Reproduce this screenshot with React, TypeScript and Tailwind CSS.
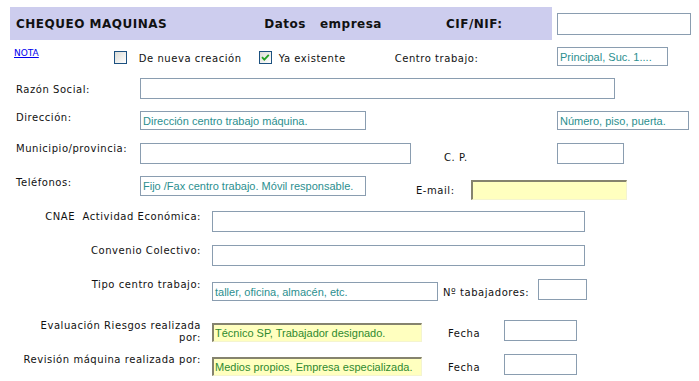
import React from "react";

const label = "font-['DejaVu_Sans',sans-serif] text-[10px] leading-[12px] tracking-[0.55px] text-[#111] whitespace-nowrap";
const field = "font-['Liberation_Sans',sans-serif] text-[11px] leading-[14px] text-[#2b8f8f] whitespace-nowrap overflow-hidden";

interface BoxProps {
  w: string;
  h?: string;
  text?: string;
  yellow?: boolean;
  className?: string;
}

const Box: React.FC<BoxProps> = ({ w, h = "h-[21px]", text, yellow, className = "" }) => {
  if (yellow) {
    return (
      <div
        className={`${w} ${h} ${className} shrink-0 bg-[#ffffbf] border-t-2 border-l-2 border-r border-b border-t-[#85836e] border-l-[#85836e] border-r-[#f4f4d0] border-b-[#f4f4d0] px-[1px] flex items-center ${field} text-[#2f8a2f]`}
      >
        {text}
      </div>
    );
  }
  return (
    <div className={`${w} ${h} ${className} shrink-0 bg-white border border-[#8a9db0] px-[2px] flex items-center ${field}`}>
      {text}
    </div>
  );
};

const Check: React.FC<{ checked?: boolean; className?: string }> = ({ checked, className = "" }) => (
  <div
    className={`${className} w-[13px] h-[13px] shrink-0 border border-[#1c5180] bg-gradient-to-br from-[#dcdcd6] to-[#ffffff] flex items-center justify-center`}
  >
    {checked && (
      <svg width="9" height="9" viewBox="0 0 9 9">
        <path d="M1 4.2 L3.3 6.6 L7.8 1.8" stroke="#21a121" strokeWidth="1.8" fill="none" />
      </svg>
    )}
  </div>
);

export default function App() {
  return (
    <div className="w-[699px] h-[381px] bg-white overflow-hidden pt-[7px]">
      {/* header */}
      <div className="flex items-start h-[33px]">
        <div className="ml-[10px] w-[542px] h-[33px] bg-[#cdcdee] flex items-center font-['DejaVu_Sans',sans-serif] font-bold text-[12px] tracking-[0.5px] text-[#111]">
          <span className="ml-[6px]">CHEQUEO MAQUINAS</span>
          <span className="ml-[97px] whitespace-pre">Datos   empresa</span>
          <span className="ml-[64px]">CIF/NIF:</span>
        </div>
        <Box w="w-[134px]" h="h-[22px]" className="ml-[5px] mt-[6px]" />
      </div>

      {/* nota / checks */}
      <div className="flex items-start h-[38px]">
        <a href="#" className="ml-[14px] mt-[8px] font-['DejaVu_Sans',sans-serif] text-[9px] leading-[10px] text-[#0000ee] underline">
          NOTA
        </a>
        <Check className="ml-[75px] mt-[11px]" />
        <span className={`${label} ml-[12px] mt-[13px]`}>De nueva creación</span>
        <Check checked className="ml-[17px] mt-[11px]" />
        <span className={`${label} ml-[7px] mt-[13px]`}>Ya existente</span>
        <span className={`${label} ml-[49px] mt-[13px]`}>Centro trabajo:</span>
        <Box w="w-[111px]" h="h-[19px]" text="Principal, Suc. 1...." className="ml-auto mr-[31px] mt-[7px]" />
      </div>

      {/* razón social */}
      <div className="flex items-start h-[33px]">
        <span className={`${label} ml-[16px] mt-[6px] w-[124px]`}>Razón Social:</span>
        <Box w="w-[475px]" />
      </div>

      {/* dirección */}
      <div className="flex items-start h-[32px]">
        <span className={`${label} ml-[16px] mt-[1px] w-[124px]`}>Dirección:</span>
        <Box w="w-[226px]" h="h-[19px]" text="Dirección centro trabajo máquina." />
        <Box w="w-[132px]" h="h-[19px]" text="Número, piso, puerta." className="ml-[191px]" />
      </div>

      {/* municipio */}
      <div className="flex items-start h-[33px]">
        <span className={`${label} ml-[16px] w-[124px]`}>Municipio/provincia:</span>
        <Box w="w-[271px]" />
        <span className={`${label} ml-[33px] mt-[9px] w-[113px]`}>C. P.</span>
        <Box w="w-[67px]" />
      </div>

      {/* teléfonos */}
      <div className="flex items-start h-[35px]">
        <span className={`${label} ml-[16px] mt-[1px] w-[124px]`}>Teléfonos:</span>
        <Box w="w-[226px]" h="h-[20px]" text="Fijo /Fax centro trabajo. Móvil responsable." />
        <span className={`${label} ml-[50px] mt-[9px] w-[55px]`}>E-mail:</span>
        <Box w="w-[156px]" h="h-[20px]" yellow className="mt-[4px]" />
      </div>

      {/* cnae */}
      <div className="flex items-start h-[34px]">
        <span className={`${label} w-[201px] text-right`}>CNAE&nbsp; Actividad Económica:</span>
        <Box w="w-[373px]" className="ml-[11px]" />
      </div>

      {/* convenio */}
      <div className="flex items-start h-[34px]">
        <span className={`${label} w-[201px] text-right`}>Convenio Colectivo:</span>
        <Box w="w-[373px]" className="ml-[11px]" />
      </div>

      {/* tipo centro */}
      <div className="flex items-start h-[41px]">
        <span className={`${label} w-[201px] text-right`}>Tipo centro trabajo:</span>
        <Box w="w-[226px]" h="h-[19px]" text="taller, oficina, almacén, etc." className="ml-[11px] mt-[3px]" />
        <span className={`${label} ml-[5px] mt-[8px] w-[95px]`}>Nº tabajadores:</span>
        <Box w="w-[49px]" />
      </div>

      {/* evaluación */}
      <div className="flex items-start h-[34px]">
        <span className={`${label} w-[201px] text-right whitespace-normal`}>
          Evaluación Riesgos realizada
          <br />
          por:
        </span>
        <Box w="w-[210px]" h="h-[19px]" yellow text="Técnico SP, Trabajador designado." className="ml-[11px] mt-[3px]" />
        <span className={`${label} ml-[26px] mt-[8px] w-[56px]`}>Fecha</span>
        <Box w="w-[73px]" />
      </div>

      {/* revisión */}
      <div className="flex items-start h-[34px]">
        <span className={`${label} w-[201px] text-right`}>Revisión máquina realizada por:</span>
        <Box w="w-[210px]" h="h-[19px]" yellow text="Medios propios, Empresa especializada." className="ml-[11px] mt-[3px]" />
        <span className={`${label} ml-[26px] mt-[8px] w-[56px]`}>Fecha</span>
        <Box w="w-[73px]" />
      </div>
    </div>
  );
}
